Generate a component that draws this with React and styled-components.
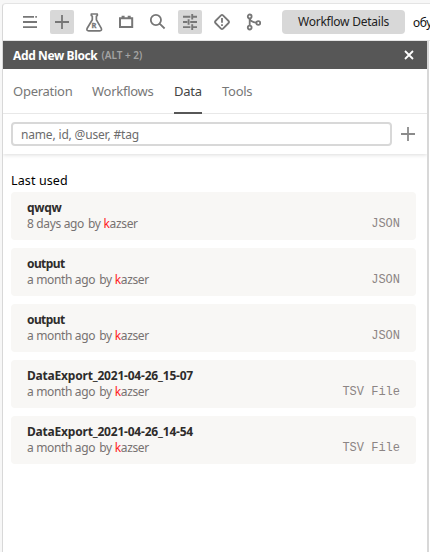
import React from "react";
import styled, { createGlobalStyle } from "styled-components";

const GlobalStyle = createGlobalStyle`
  * { box-sizing: border-box; }
  body { margin: 0; background: #f7f7f7; overflow: hidden; }
  body, button, input { font-family: "Noto Sans", sans-serif; }
`;

const Shell = styled.div`
  width: 430px;
  height: 552px;
  padding: 3px 0 0 2px;
  overflow: hidden;
`;
const Window = styled.div`
  height: 549px;
  background: #fff;
  border-top: 1px solid #e4e4e4;
  border-left: 1px solid #d8d8d8;
  border-top-left-radius: 4px;
  overflow: hidden;
`;
const Toolbar = styled.header`
  display: flex;
  align-items: center;
  width: 460px;
  height: 37px;
  padding-left: 15px;
  gap: 8px;
  border-bottom: 1px solid #e4e4e4;
`;
const IconButton = styled.button`
  display: flex;
  flex: none;
  width: 24px;
  height: 24px;
  padding: 0;
  border: 0;
  border-radius: 2px;
  color: #777;
  background: ${(p) => (p.$active ? "#d8d8d8" : "transparent")};
`;
const Icon = styled.svg`
  display: block;
  width: 24px;
  height: 24px;
  fill: none;
  stroke: currentColor;
  stroke-width: 1.8;
`;
const IconLetter = styled.text`
  font: bold 7.5px "Noto Sans", sans-serif;
  fill: currentColor;
  stroke: currentColor;
  stroke-width: 0.3;
`;
const DetailsButton = styled.button`
  flex: none;
  width: 123px;
  height: 24px;
  margin-left: 8px;
  padding: 0;
  border: 0;
  border-radius: 4px;
  color: #222;
  background: #d8d8d8;
  font-size: 12px;
  line-height: 24px;
  letter-spacing: -0.24px;
`;
const WorkflowName = styled.span`
  color: #111;
  font-size: 12px;
  letter-spacing: -0.3px;
`;
const Panel = styled.main`
  width: 426px;
  height: 511px;
  border-right: 2px solid #d8d8d8;
`;
const PanelTitle = styled.div`
  display: flex;
  align-items: center;
  height: 28px;
  padding: 0 13px 0 10px;
  color: #fff;
  background: #575757;
`;
const Title = styled.h1`
  margin: 0;
  font-size: 12px;
  font-weight: 700;
  letter-spacing: -0.38px;
`;
const Shortcut = styled.span`
  flex: 1;
  margin-left: 4px;
  color: #a3a3a3;
  font-size: 10px;
  font-weight: 600;
  letter-spacing: 0;
`;
const CloseIcon = styled.svg`
  width: 10px;
  height: 10px;
  stroke: #fff;
  stroke-width: 1.8;
`;
const Tabs = styled.nav`
  display: flex;
  gap: 20px;
  height: 45px;
  padding-left: 10px;
  border-bottom: 1px solid #e8e8e8;
`;
const Tab = styled.div`
  width: ${(p) => p.$width}px;
  height: 45px;
  border-bottom: 2px solid ${(p) => (p.$active ? "#575757" : "transparent")};
  color: ${(p) => (p.$active ? "#444" : "#777")};
  font-size: 13px;
  line-height: 44px;
  letter-spacing: -0.26px;
  white-space: nowrap;
`;
const SearchRow = styled.div`
  display: flex;
  align-items: center;
  gap: 4px;
  height: 40px;
  padding-left: 8px;
  color: #8b8b8b;
  box-shadow: 0 1px 4px rgba(0, 0, 0, 0.14);
  clip-path: inset(0 0 -6px 0);
`;
const SearchInput = styled.input`
  width: 381px;
  height: 24px;
  padding: 0 8px;
  border: 2px solid #d8d8d8;
  border-radius: 4px;
  outline: 0;
  background: #fff;
  font-size: 12px;
  letter-spacing: -0.17px;
  &::placeholder { color: #6c6c6c; opacity: 1; }
`;
const Recent = styled.section`
  padding: 18px 9px 0 8px;
`;
const SectionTitle = styled.h2`
  height: 20px;
  margin: 0;
  color: #000;
  font-size: 12.5px;
  font-weight: 400;
  line-height: 18px;
  letter-spacing: 0.12px;
`;
const List = styled.div`
  display: grid;
  gap: 8px;
`;
const Card = styled.article`
  display: grid;
  grid-template-columns: 1fr auto;
  grid-template-rows: 16px 16px;
  width: 405px;
  height: 48px;
  padding: 8px 16px;
  border-radius: 4px;
  background: #f8f7f5;
  line-height: 16px;
  white-space: nowrap;
`;
const Name = styled.strong`
  grid-column: 1 / 3;
  color: #2e2c2b;
  font-size: 12px;
  letter-spacing: ${(p) => p.$spacing}px;
`;
const Meta = styled.span`
  display: flex;
  gap: 4px;
  color: #777271;
  font-size: 12px;
  letter-spacing: -0.35px;
`;
const Initial = styled.span`
  color: #f22;
`;
const Author = styled.span`
  margin-left: -1px;
  letter-spacing: -0.35px;
`;
const Kind = styled.span`
  color: #8c8584;
  font: 12px/17px "Courier New", "Liberation Mono", monospace;
`;

const ICONS = {
  menu: <path d="M5 6.8h11M17.3 6.8h1.6M5 12h14M5 17.1h14" />,
  plus: <path d="M12 5v14M5 12h14" />,
  flask: (
    <>
      <path d="M9.3 4h6M9.3 4v1.6l1 .6v3.6L5.2 18.2q-1.1 2.6 1.5 2.6h11q2.6 0 1.5-2.6L14.4 9.8V6.2l.9-.6V4" strokeWidth="1.7" strokeLinejoin="round" strokeLinecap="round" />
      <IconLetter x="9.6" y="17.9">R</IconLetter>
    </>
  ),
  block: <path d="M6 8.2h12.2v8.9H6zM7.6 6.7h3M13.7 6.7h3" strokeWidth="2" />,
  search: <path d="M15 10a5.1 5.1 0 1 1-10.2 0a5.1 5.1 0 0 1 10.2 0M13.6 13.7l5 4.8" />,
  tune: <path d="M5 6.8h7.4M14.2 4v5.6M14.2 6.8H19M5 12h4.3M10.6 9.2v5.6M12.2 12H19M5 17.1h7.4M14.2 14.3v5.6M14.2 17.1H19" strokeWidth="1.9" />,
  alert: (
    <>
      <path d="M11 5.4q1-1 2 0L18.6 11q1 1 0 2L13 18.6q-1 1-2 0L5.4 13q-1-1 0-2z" />
      <path d="M12 8v4.8M12 14.2v1.8" />
    </>
  ),
  branch: (
    <>
      <circle cx="7.7" cy="6.4" r="1.9" />
      <circle cx="7.7" cy="17.6" r="1.9" />
      <circle cx="16.3" cy="13" r="1.9" />
      <path d="M7.7 8.3v7.4M7.7 8.7q1.1 3.1 6.5 4" />
    </>
  ),
};

const TOOLS = ["menu", "plus", "flask", "block", "search", "tune", "alert", "branch"];
const TABS = [
  { label: "Operation", width: 59 },
  { label: "Workflows", width: 62 },
  { label: "Data", width: 28 },
  { label: "Tools", width: 32 },
];
const ITEMS = [
  { name: "qwqw", when: "8 days ago", kind: "JSON", spacing: -0.35 },
  { name: "output", when: "a month ago", kind: "JSON", spacing: -0.6 },
  { name: "output", when: "a month ago", kind: "JSON", spacing: -0.6 },
  { name: "DataExport_2021-04-26_15-07", when: "a month ago", kind: "TSV File", spacing: -0.2 },
  { name: "DataExport_2021-04-26_14-54", when: "a month ago", kind: "TSV File", spacing: -0.2 },
];

export default function App() {
  return (
    <Shell>
      <GlobalStyle />
      <Window>
        <Toolbar>
          {TOOLS.map((name) => (
            <IconButton key={name} $active={name === "plus" || name === "tune"}>
              <Icon viewBox="0 0 24 24">{ICONS[name]}</Icon>
            </IconButton>
          ))}
          <DetailsButton>Workflow Details</DetailsButton>
          <WorkflowName>обу</WorkflowName>
        </Toolbar>
        <Panel>
          <PanelTitle>
            <Title>Add New Block</Title>
            <Shortcut>(ALT + 2)</Shortcut>
            <CloseIcon viewBox="0 0 10 10"><path d="M1 1l8 8M9 1L1 9" /></CloseIcon>
          </PanelTitle>
          <Tabs>
            {TABS.map((tab) => (
              <Tab key={tab.label} $width={tab.width} $active={tab.label === "Data"}>{tab.label}</Tab>
            ))}
          </Tabs>
          <SearchRow>
            <SearchInput placeholder="name, id, @user, #tag" />
            <Icon viewBox="0 0 24 24">{ICONS.plus}</Icon>
          </SearchRow>
          <Recent>
            <SectionTitle>Last used</SectionTitle>
            <List>
              {ITEMS.map((item, i) => (
                <Card key={i}>
                  <Name $spacing={item.spacing}>{item.name}</Name>
                  <Meta>
                    <span>{item.when}</span>
                    <span>by</span>
                    <Author><Initial>k</Initial>azser</Author>
                  </Meta>
                  <Kind>{item.kind}</Kind>
                </Card>
              ))}
            </List>
          </Recent>
        </Panel>
      </Window>
    </Shell>
  );
}
